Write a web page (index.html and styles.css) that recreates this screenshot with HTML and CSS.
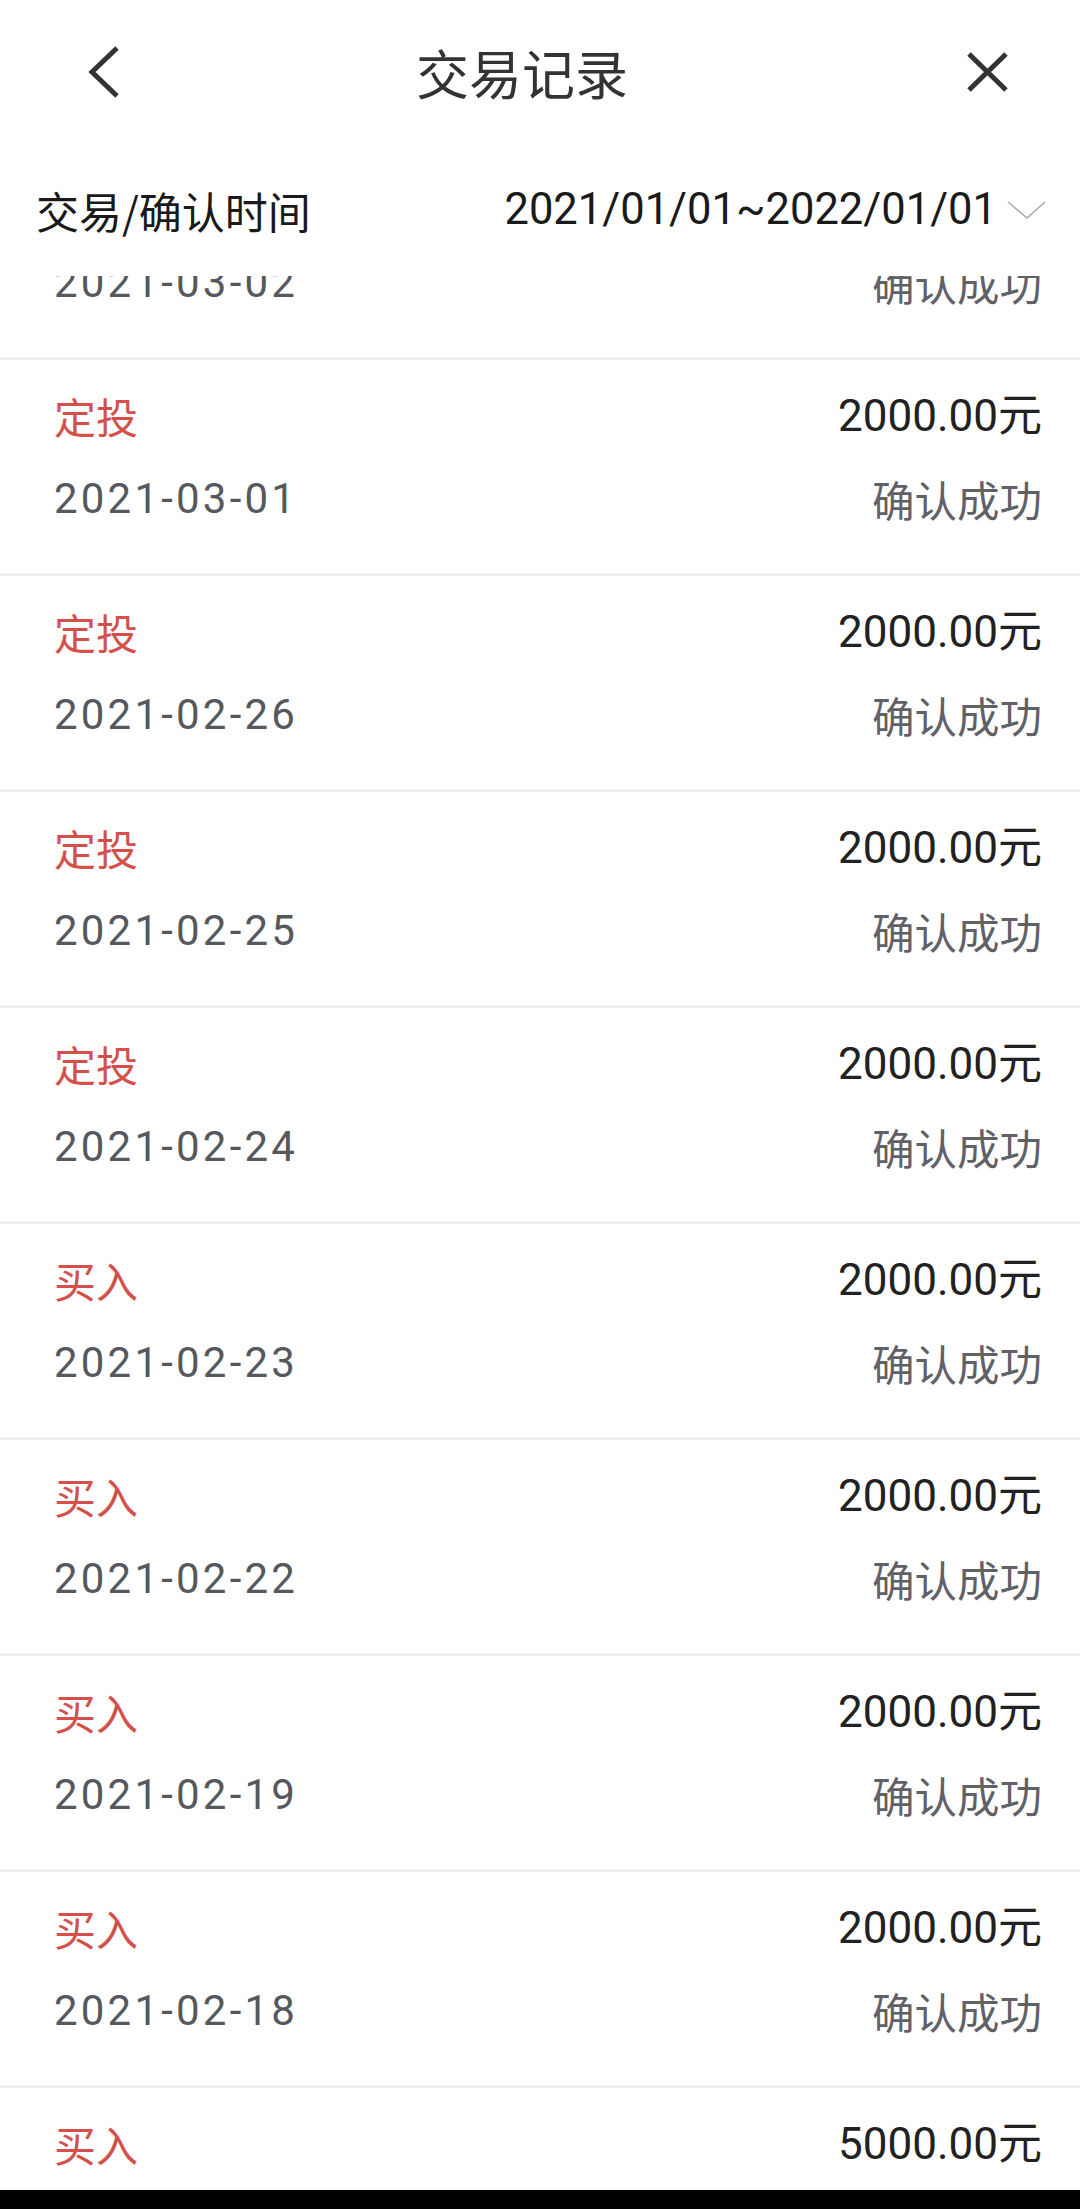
FILE: index.html
```html
<!DOCTYPE html>
<html lang="zh-CN">
<head>
    <meta charset="UTF-8">
    <meta name="viewport" content="width=device-width, initial-scale=1.0">
    <title>交易记录</title>
    <link rel="stylesheet" href="styles.css">
</head>
<body>
    <div class="page">
        <div class="nav">
            <div class="nav-back">
                <svg width="50" height="64" viewBox="0 0 50 64">
                    <path d="M37 8 L12 32 L37 56" fill="none" stroke="#333" stroke-width="5"/>
                </svg>
            </div>
            <div class="nav-title">交易记录</div>
            <div class="nav-close">
                <svg width="56" height="64" viewBox="0 0 56 64">
                    <path d="M9 14 L46 50 M46 14 L9 50" fill="none" stroke="#333" stroke-width="5"/>
                </svg>
            </div>
        </div>

        <div class="filter">
            <span class="filter-label">交易/确认时间</span>
            <span class="filter-range">
                <span class="filter-date">2021/01/01~2022/01/01</span>
                <svg width="40" height="24" viewBox="0 0 40 24">
                    <path d="M2 4 L21 20 L39 4" fill="none" stroke="#aaa" stroke-width="1.6"/>
                </svg>
            </span>
        </div>

        <div class="list">
            <div class="list-inner">
                <div class="record">
                    <div class="record-line">
                        <span class="record-type">定投</span>
                        <span class="record-amount">2000.00元</span>
                    </div>
                    <div class="record-line">
                        <span class="record-date">2021-03-02</span>
                        <span class="record-status">确认成功</span>
                    </div>
                </div>
                <div class="record">
                    <div class="record-line">
                        <span class="record-type">定投</span>
                        <span class="record-amount">2000.00元</span>
                    </div>
                    <div class="record-line">
                        <span class="record-date">2021-03-01</span>
                        <span class="record-status">确认成功</span>
                    </div>
                </div>
                <div class="record">
                    <div class="record-line">
                        <span class="record-type">定投</span>
                        <span class="record-amount">2000.00元</span>
                    </div>
                    <div class="record-line">
                        <span class="record-date">2021-02-26</span>
                        <span class="record-status">确认成功</span>
                    </div>
                </div>
                <div class="record">
                    <div class="record-line">
                        <span class="record-type">定投</span>
                        <span class="record-amount">2000.00元</span>
                    </div>
                    <div class="record-line">
                        <span class="record-date">2021-02-25</span>
                        <span class="record-status">确认成功</span>
                    </div>
                </div>
                <div class="record">
                    <div class="record-line">
                        <span class="record-type">定投</span>
                        <span class="record-amount">2000.00元</span>
                    </div>
                    <div class="record-line">
                        <span class="record-date">2021-02-24</span>
                        <span class="record-status">确认成功</span>
                    </div>
                </div>
                <div class="record">
                    <div class="record-line">
                        <span class="record-type">买入</span>
                        <span class="record-amount">2000.00元</span>
                    </div>
                    <div class="record-line">
                        <span class="record-date">2021-02-23</span>
                        <span class="record-status">确认成功</span>
                    </div>
                </div>
                <div class="record">
                    <div class="record-line">
                        <span class="record-type">买入</span>
                        <span class="record-amount">2000.00元</span>
                    </div>
                    <div class="record-line">
                        <span class="record-date">2021-02-22</span>
                        <span class="record-status">确认成功</span>
                    </div>
                </div>
                <div class="record">
                    <div class="record-line">
                        <span class="record-type">买入</span>
                        <span class="record-amount">2000.00元</span>
                    </div>
                    <div class="record-line">
                        <span class="record-date">2021-02-19</span>
                        <span class="record-status">确认成功</span>
                    </div>
                </div>
                <div class="record">
                    <div class="record-line">
                        <span class="record-type">买入</span>
                        <span class="record-amount">2000.00元</span>
                    </div>
                    <div class="record-line">
                        <span class="record-date">2021-02-18</span>
                        <span class="record-status">确认成功</span>
                    </div>
                </div>
                <div class="record">
                    <div class="record-line">
                        <span class="record-type">买入</span>
                        <span class="record-amount">5000.00元</span>
                    </div>
                    <div class="record-line">
                        <span class="record-date">2021-02-17</span>
                        <span class="record-status">确认成功</span>
                    </div>
                </div>
            </div>
        </div>

        <div class="system-bar"></div>
    </div>
</body>
</html>
```

FILE: styles.css
```css
body {
    margin: 0;
    background-color: #ffffff;
    font-family: "Noto Sans CJK SC", sans-serif;
    overflow: hidden;
}
.page {
    display: flex;
    flex-direction: column;
    height: 2209px;
}

/* top bar */
.nav {
    display: flex;
    align-items: center;
    height: 144px;
    flex-shrink: 0;
}
.nav-back {
    width: 170px;
    padding-left: 80px;
    box-sizing: border-box;
    display: flex;
    align-items: center;
}
.nav-title {
    flex: 1;
    text-align: center;
    font-size: 53px;
    line-height: 64px;
    color: #333;
}
.nav-close {
    width: 206px;
    padding-right: 64px;
    box-sizing: border-box;
    display: flex;
    justify-content: flex-end;
    align-items: center;
}

/* date filter */
.filter {
    display: flex;
    justify-content: space-between;
    align-items: center;
    height: 132px;
    padding: 0 34px 0 36px;
    flex-shrink: 0;
}
.filter-label {
    font-size: 43px;
    line-height: 60px;
    color: #1a1a1a;
}
.filter-range {
    display: flex;
    align-items: center;
    gap: 9px;
}
.filter-date {
    font-family: Roboto, "Noto Sans CJK SC", sans-serif;
    font-size: 43.5px;
    line-height: 60px;
    color: #1a1a1a;
}

/* records */
.list {
    flex: 1;
    overflow: hidden;
}
.list-inner {
    margin-top: -132px;
}
.record {
    height: 160px;
    padding: 26px 38px 27px 54px;
    border-bottom: 3px solid #eeeeee;
    display: flex;
    flex-direction: column;
    gap: 23px;
}
.record-line {
    display: flex;
    justify-content: space-between;
    align-items: center;
    height: 60px;
}
.record-type {
    font-size: 42px;
    line-height: 60px;
    color: #d4514b;
}
.record-amount {
    font-family: Roboto, "Noto Sans CJK SC", sans-serif;
    font-size: 44px;
    line-height: 60px;
    color: #222;
}
.record-date {
    font-family: Roboto, "Noto Sans CJK SC", sans-serif;
    font-size: 42px;
    line-height: 60px;
    letter-spacing: 3.2px;
    color: #55585d;
}
.record-status {
    font-size: 42.5px;
    line-height: 60px;
    color: #5f6166;
}

.system-bar {
    height: 19px;
    background-color: #000;
    flex-shrink: 0;
}
```
